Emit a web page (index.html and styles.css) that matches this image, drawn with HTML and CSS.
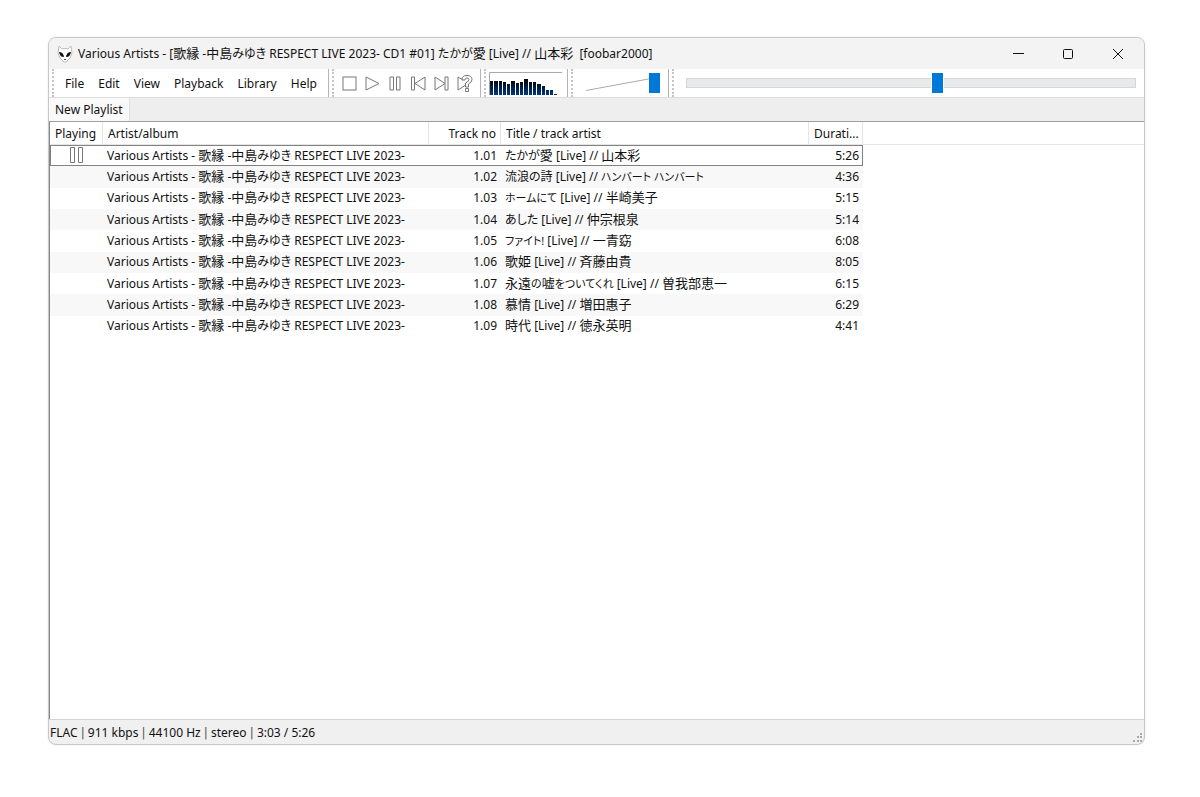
FILE: index.html
```html
<!DOCTYPE html>
<html lang="en">
<head>
<meta charset="utf-8">
<title>foobar2000</title>
<link rel="stylesheet" href="styles.css">
</head>
<body>
<main class="window">
  <header class="titlebar">
    <svg class="logo" width="16" height="18" viewBox="0 0 16 18">
      <path d="M2 1 5 4Q8 3 11 4L14 1 15 8 13 13 9 17H7L3 13 1 8Z" fill="#fff" stroke="#bbb" stroke-width="1"/>
      <path d="M2.500 7.500Q6 7.500 6.500 11.500Q3.500 12 2.500 7.500ZM13.500 7.500Q10 7.500 9.500 11.500Q12.500 12 13.500 7.500Z" fill="#111" stroke="#111"/>
      <path d="M7 14 8 15 9 14" fill="none" stroke="#555"/>
    </svg>
    <h1 class="title">Various Artists - [<span lang="ja"><span class="kanji">歌縁</span> -<span class="kanji">中島</span>みゆき</span> RESPECT LIVE 2023- CD1 #01] <span lang="ja">たかが<span class="kanji">愛</span></span> [Live] // <span lang="ja" class="kanji">山本彩</span> &nbsp;[foobar2000]</h1>
    <div class="controls">
      <button class="control" aria-label="Minimize"><svg width="12" height="12" viewBox="0 0 12 12"><path d="M1 5.500H12"/></svg></button>
      <button class="control" aria-label="Maximize"><svg width="12" height="12" viewBox="0 0 12 12"><rect x="1.500" y="1.500" width="9" height="9" rx="1"/></svg></button>
      <button class="control" aria-label="Close"><svg width="12" height="12" viewBox="0 0 12 12"><path d="M1 1 11 11M11 1 1 11"/></svg></button>
    </div>
  </header>

  <div class="toolbar">
    <nav class="band menu">
      <button class="menu-item">File</button>
      <button class="menu-item">Edit</button>
      <button class="menu-item">View</button>
      <button class="menu-item">Playback</button>
      <button class="menu-item">Library</button>
      <button class="menu-item">Help</button>
    </nav>
    <div class="band playback">
      <button class="tool" aria-label="Stop"><svg width="17" height="17" viewBox="0 0 17 17"><rect x="2" y="2" width="13" height="13"/></svg></button>
      <button class="tool" aria-label="Play"><svg width="17" height="17" viewBox="0 0 17 17"><path d="M2 2 15 8.500 2 15Z"/></svg></button>
      <button class="tool" aria-label="Pause"><svg width="17" height="17" viewBox="0 0 17 17"><path d="M3 2H6.500V15H3ZM9.500 2H13V15H9.500Z"/></svg></button>
      <button class="tool" aria-label="Previous"><svg width="17" height="17" viewBox="0 0 17 17"><path d="M1.500 2H4.500V15H1.500ZM15 2V15L5 8.500Z"/></svg></button>
      <button class="tool" aria-label="Next"><svg width="17" height="17" viewBox="0 0 17 17"><path d="M12 2H15V15H12ZM2 2V15L12 8.500Z"/></svg></button>
      <button class="tool" aria-label="Random"><svg width="17" height="17" viewBox="0 0 17 17"><path d="M6.500 4.700 2 2V15L9 10.500M6 4Q6 0.500 11 0.500Q16 0.500 16 4.500Q16 7 12.500 9V12H9.500V8Q13 6 13 4.500Q13 3 11 3Q9 3 9 5H6ZM9.500 13.500H12.500V16.500H9.500Z"/></svg></button>
    </div>
    <div class="band spectrum">
      <svg class="bars" width="76" height="26" viewBox="0 0 76 26">
        <defs><linearGradient id="bar" gradientUnits="userSpaceOnUse" x1="0" y1="8" x2="0" y2="25"><stop offset="0" stop-color="#000"/><stop offset="1" stop-color="#003a88"/></linearGradient></defs>
        <path d="M.5 24V1.500H73" fill="none" stroke="#a8a8a8"/>
        <path fill="url(#bar)" d="M1 10h3v14H1zM5 10h4v14H5zM10 10h3v14h-3zM14 11h3v13h-3zM18 13h3v11h-3zM22 10h4v14h-4zM27 12h3v12h-3zM31 11h3v13h-3zM35 8h4v16h-4zM40 11h3v13h-3zM44 11h3v13h-3zM48 13h4v11h-4zM53 15h3v9h-3zM57 19h3v5h-3zM61 19h3v5h-3z"/>
        <path fill="#222" d="M65 23h3v1h-3z"/>
      </svg>
    </div>
    <div class="band volume">
      <svg class="wedge" width="74" height="20" viewBox="0 0 74 20"><path d="M0 17.500 65 5.500" stroke="#aaa"/></svg>
      <input class="slider" type="range" aria-label="Volume" min="0" max="100" value="100">
    </div>
    <div class="band seek">
      <input class="slider seekbar" type="range" aria-label="Position" min="0" max="326" value="183">
    </div>
  </div>

  <div class="tabs"><button class="tab">New Playlist</button></div>

  <section class="playlist">
    <table class="tracks">
      <colgroup><col class="col-playing"><col class="col-artist"><col class="col-number"><col class="col-title"><col class="col-duration"><col></colgroup>
      <thead>
        <tr><th>Playing</th><th>Artist/album</th><th class="num">Track no</th><th>Title / track artist</th><th>Durati...</th><th class="rest"></th></tr>
      </thead>
      <tbody>
        <tr class="current"><td class="state"><svg class="paused" width="15" height="17" viewBox="0 0 15 17"><path d="M1.500 .5H5.500V15.500H1.500ZM9.500 .5H13.500V15.500H9.500Z"/></svg></td><td>Various Artists - <span lang="ja"><span class="kanji">歌縁</span> -<span class="kanji">中島</span>みゆき</span> RESPECT LIVE 2023-</td><td class="num">1.01</td><td><span lang="ja">たかが<span class="kanji">愛</span></span> [Live] // <span lang="ja" class="kanji">山本彩</span></td><td class="num">5:26</td><td class="rest"></td></tr>
        <tr><td></td><td>Various Artists - <span lang="ja"><span class="kanji">歌縁</span> -<span class="kanji">中島</span>みゆき</span> RESPECT LIVE 2023-</td><td class="num">1.02</td><td><span lang="ja">流浪の詩</span> [Live] // <span lang="ja" class="kana">ハンバート ハンバート</span></td><td class="num">4:36</td><td class="rest"></td></tr>
        <tr><td></td><td>Various Artists - <span lang="ja"><span class="kanji">歌縁</span> -<span class="kanji">中島</span>みゆき</span> RESPECT LIVE 2023-</td><td class="num">1.03</td><td><span lang="ja" class="kana">ホームにて</span> [Live] // <span lang="ja" class="kanji">半崎美子</span></td><td class="num">5:15</td><td class="rest"></td></tr>
        <tr><td></td><td>Various Artists - <span lang="ja"><span class="kanji">歌縁</span> -<span class="kanji">中島</span>みゆき</span> RESPECT LIVE 2023-</td><td class="num">1.04</td><td><span lang="ja">あした</span> [Live] // <span lang="ja" class="kanji">仲宗根泉</span></td><td class="num">5:14</td><td class="rest"></td></tr>
        <tr><td></td><td>Various Artists - <span lang="ja"><span class="kanji">歌縁</span> -<span class="kanji">中島</span>みゆき</span> RESPECT LIVE 2023-</td><td class="num">1.05</td><td><span lang="ja" class="kana">ファイト!</span> [Live] // <span lang="ja" class="kanji">一青窈</span></td><td class="num">6:08</td><td class="rest"></td></tr>
        <tr><td></td><td>Various Artists - <span lang="ja"><span class="kanji">歌縁</span> -<span class="kanji">中島</span>みゆき</span> RESPECT LIVE 2023-</td><td class="num">1.06</td><td><span lang="ja" class="kanji">歌姫</span> [Live] // <span lang="ja" class="kanji">斉藤由貴</span></td><td class="num">8:05</td><td class="rest"></td></tr>
        <tr><td></td><td>Various Artists - <span lang="ja"><span class="kanji">歌縁</span> -<span class="kanji">中島</span>みゆき</span> RESPECT LIVE 2023-</td><td class="num">1.07</td><td><span lang="ja"><span class="kanji">永遠</span><span class="kana">の</span><span class="kanji">嘘</span><span class="kana">をついてくれ</span></span> [Live] // <span lang="ja" class="kanji">曽我部恵一</span></td><td class="num">6:15</td><td class="rest"></td></tr>
        <tr><td></td><td>Various Artists - <span lang="ja"><span class="kanji">歌縁</span> -<span class="kanji">中島</span>みゆき</span> RESPECT LIVE 2023-</td><td class="num">1.08</td><td><span lang="ja" class="kanji">慕情</span> [Live] // <span lang="ja" class="kanji">増田惠子</span></td><td class="num">6:29</td><td class="rest"></td></tr>
        <tr><td></td><td>Various Artists - <span lang="ja"><span class="kanji">歌縁</span> -<span class="kanji">中島</span>みゆき</span> RESPECT LIVE 2023-</td><td class="num">1.09</td><td><span lang="ja" class="kanji">時代</span> [Live] // <span lang="ja" class="kanji">徳永英明</span></td><td class="num">4:41</td><td class="rest"></td></tr>
      </tbody>
    </table>
  </section>

  <footer class="status">
    <span>FLAC <span class="sep">|</span> 911 kbps <span class="sep">|</span> 44100 Hz <span class="sep">|</span> stereo <span class="sep">|</span> 3:03 / 5:26</span>
    <svg class="resize" width="10" height="10" viewBox="0 0 10 10"><path fill="#aaa" d="M7 0h2v2H7zM4 3h2v2H4zM7 3h2v2H7zM0 7h2v2H0zM4 7h2v2H4zM7 7h2v2H7z"/></svg>
  </footer>
</main>
</body>
</html>
```
FILE: styles.css
```css
* { box-sizing: border-box; }

body {
  margin: 0;
  padding: 37px 55px 52px 48px;
  min-height: 100vh;
  display: flex;
  background: #fff;
  color: #111;
  font: 12px/16px "Noto Sans", "Noto Sans CJK JP", sans-serif;
}

button {
  margin: 0;
  padding: 0;
  border: 0;
  background: none;
  color: inherit;
  font: inherit;
}

[lang="ja"] { font-feature-settings: "palt"; }

.kanji {
  font-size: 13px;
  line-height: 12px;
}

.kana { font-size: 11px; }

.window {
  flex: 1;
  min-width: 0;
  display: flex;
  flex-direction: column;
  overflow: hidden;
  border: 1px solid #c8c8c8;
  border-radius: 8px;
  background: #f0f0f0;
  box-shadow: 0 0 3px rgba(0, 0, 0, 0.08);
}

.titlebar {
  display: flex;
  align-items: center;
  height: 31px;
  padding-left: 8px;
  background: #f3f3f3;
}

.logo { margin-right: 5px; }

.title {
  flex: 1;
  margin: 0;
  font-size: 12px;
  font-weight: 400;
  white-space: nowrap;
}

.controls {
  display: flex;
  padding-right: 1px;
}

.control {
  display: grid;
  place-items: center;
  width: 50px;
  height: 30px;
}

.control svg {
  fill: none;
  stroke: #111;
}

.toolbar {
  display: flex;
  height: 29px;
  padding-left: 3px;
  border-bottom: 1px solid #dcdcdc;
  background: #fff;
}

.band {
  display: flex;
  align-items: center;
  margin-right: 3px;
  border-left: 2px dotted #c4c4c4;
  border-right: 1px solid #b4b4b4;
}

.menu {
  gap: 14px;
  padding: 2px 11px 0;
}

.playback { padding: 1px 4px 0; }

.tool {
  display: grid;
  place-items: center;
  width: 23px;
  height: 24px;
}

.tool svg, .paused {
  fill: none;
  stroke: #777;
}

.spectrum { padding: 1px 2px 0 3px; }

.volume {
  display: grid;
  padding: 0 8px 0 13px;
}

.wedge, .volume .slider { grid-area: 1 / 1; }

.slider {
  appearance: none;
  width: 74px;
  height: 20px;
  margin: 0;
  background: none;
}

.slider::-webkit-slider-thumb {
  appearance: none;
  width: 11px;
  height: 20px;
  border-radius: 0;
  background: #0078d7;
}

.seek {
  flex: 1;
  margin-right: 0;
  padding: 0 8px 0 12px;
  border-right: 0;
}

.seekbar { width: 100%; }

.seekbar::-webkit-slider-runnable-track {
  height: 10px;
  border: 1px solid #d6d6d6;
  background: #e7eaea;
}

.seekbar::-webkit-slider-thumb {
  margin-top: -6px;
  box-shadow: 0 0 0 1px #fff;
}

.tabs {
  display: flex;
  height: 23px;
  background: #eee;
}

.tab {
  padding: 0 6px;
  border-right: 1px solid #e0e0e0;
  background: #f9f9f9;
}

.playlist {
  flex: 1;
  border-top: 1px solid #a0a0a0;
  border-left: 1px solid #828790;
  background: #fff;
}

.tracks {
  width: 100%;
  height: 215px;
  table-layout: fixed;
  border-collapse: separate;
  border-spacing: 0;
}

.col-playing { width: 53px; }
.col-artist { width: 326px; }
.col-number { width: 72px; }
.col-title { width: 308px; }
.col-duration { width: 54px; }

th {
  height: 23px;
  padding: 2px 5px 0;
  border-right: 1px solid #e5e5e5;
  border-bottom: 1px solid #e5e5e5;
  font-weight: 400;
  text-align: left;
  white-space: nowrap;
}

td {
  height: 21px;
  padding: 0 4px;
  line-height: 16px;
  white-space: nowrap;
}

.num { text-align: right; }

th.num { padding-right: 4px; }

th.rest { border-right: 0; }

tbody tr:nth-child(even) td:not(.rest) { background: #f8f8f8; }

.current td:not(.rest) {
  border-top: 1px solid #828282;
  border-bottom: 1px solid #828282;
}

.current td:first-child { border-left: 1px solid #828282; }

.current td:nth-child(5) {
  padding-right: 3px;
  border-right: 1px solid #828282;
}

.current .state {
  padding: 0 5px 0 4px;
}

.paused {
  display: block;
  margin: 0 auto;
}

.status {
  display: flex;
  align-items: center;
  justify-content: space-between;
  height: 25px;
  padding: 2px 1px 0;
  border-top: 1px solid #d4d4d4;
}

.sep {
  font-family: "DejaVu Sans", sans-serif;
  color: #555;
}

.resize {
  align-self: flex-end;
  margin-bottom: 1px;
}
```
